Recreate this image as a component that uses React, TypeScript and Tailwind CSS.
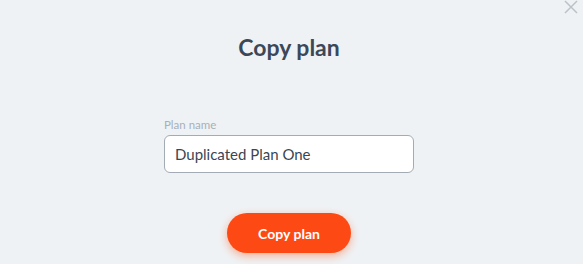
import React from "react";

export default function App() {
  return (
    <div
      className="relative w-[583px] h-[264px] bg-[#eff2f5] flex flex-col items-center overflow-hidden pr-[5px]"
      style={{ fontFamily: "Lato, 'Noto Sans', sans-serif" }}
    >
      <button className="absolute right-[5px] top-[0px] w-[14px] h-[14px] text-[#bcc2ca]">
        <svg viewBox="0 0 14 14" width="14" height="14" fill="none" stroke="currentColor" strokeWidth="1.5">
          <path d="M1 1 L13 13 M13 1 L1 13" />
        </svg>
      </button>
      <h1 className="mt-[32px] text-[23px] leading-[30px] font-bold text-[#3c4858]">Copy plan</h1>
      <div className="mt-[56px] w-[250px] flex flex-col">
        <label className="text-[11.5px] leading-[14px] text-[#a7b0ba] mb-[3px]">Plan name</label>
        <input
          className="h-[38px] w-full rounded-[6px] border border-[#a3abb5] bg-white px-[10px] text-[15px] text-[#3d4552] outline-none"
          defaultValue="Duplicated Plan One"
        />
      </div>
      <button className="mt-[40px] h-[40px] w-[124px] rounded-full bg-[#fd4a15] text-white text-[14px] font-bold shadow-[0_3px_8px_rgba(253,90,30,0.45)]">
        Copy plan
      </button>
    </div>
  );
}
